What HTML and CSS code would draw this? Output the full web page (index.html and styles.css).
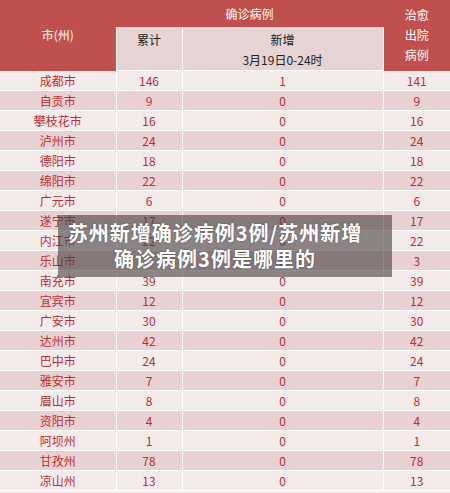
FILE: index.html
```html
<!DOCTYPE html>
<html lang="zh-CN">
<head>
    <meta charset="UTF-8">
    <title>苏州新增确诊病例3例</title>
    <link rel="stylesheet" href="styles.css">
</head>
<body>
    <div class="page">
        <table class="case-table">
            <colgroup>
                <col class="col-city">
                <col class="col-total">
                <col class="col-new">
                <col class="col-cured">
            </colgroup>
            <thead>
                <tr class="head-top">
                    <th rowspan="2" class="head-red">市(州)</th>
                    <th colspan="2" class="head-red">确诊病例</th>
                    <th rowspan="2" class="head-red head-cured">治愈<br>出院<br>病例</th>
                </tr>
                <tr class="head-sub">
                    <th class="sub">累计</th>
                    <th class="sub">新增<br>3月19日0-24时</th>
                </tr>
            </thead>
            <tbody>
                <tr><td>成都市</td><td>146</td><td>1</td><td>141</td></tr>
                <tr><td>自贡市</td><td>9</td><td>0</td><td>9</td></tr>
                <tr><td>攀枝花市</td><td>16</td><td>0</td><td>16</td></tr>
                <tr><td>泸州市</td><td>24</td><td>0</td><td>24</td></tr>
                <tr><td>德阳市</td><td>18</td><td>0</td><td>18</td></tr>
                <tr><td>绵阳市</td><td>22</td><td>0</td><td>22</td></tr>
                <tr><td>广元市</td><td>6</td><td>0</td><td>6</td></tr>
                <tr><td>遂宁市</td><td>17</td><td>0</td><td>17</td></tr>
                <tr><td>内江市</td><td>22</td><td>0</td><td>22</td></tr>
                <tr><td>乐山市</td><td>3</td><td>0</td><td>3</td></tr>
                <tr><td>南充市</td><td>39</td><td>0</td><td>39</td></tr>
                <tr><td>宜宾市</td><td>12</td><td>0</td><td>12</td></tr>
                <tr><td>广安市</td><td>30</td><td>0</td><td>30</td></tr>
                <tr><td>达州市</td><td>42</td><td>0</td><td>42</td></tr>
                <tr><td>巴中市</td><td>24</td><td>0</td><td>24</td></tr>
                <tr><td>雅安市</td><td>7</td><td>0</td><td>7</td></tr>
                <tr><td>眉山市</td><td>8</td><td>0</td><td>8</td></tr>
                <tr><td>资阳市</td><td>4</td><td>0</td><td>4</td></tr>
                <tr><td>阿坝州</td><td>1</td><td>0</td><td>1</td></tr>
                <tr><td>甘孜州</td><td>78</td><td>0</td><td>78</td></tr>
                <tr><td>凉山州</td><td>13</td><td>0</td><td>13</td></tr>
            </tbody>
        </table>

        <div class="title-overlay">
            苏州新增确诊病例3例/苏州新增<br>确诊病例3例是哪里的
        </div>
    </div>
</body>
</html>
```

FILE: styles.css
```css
body {
    margin: 0;
    padding: 0;
    background: #f4eded;
    font-family: "Noto Sans CJK SC", "Noto Sans", sans-serif;
}

.page {
    position: relative;
    width: 450px;
    height: 493px;
    overflow: hidden;
}

.case-table {
    width: 450px;
    border-collapse: collapse;
    table-layout: fixed;
    font-size: 12px;
}

.col-city { width: 116px; }
.col-total { width: 66px; }
.col-new { width: 201px; }
.col-cured { width: 67px; }

.head-red {
    background-color: #c0504d;
    color: #fff;
    font-weight: normal;
    padding: 0;
    line-height: 20px;
}

.head-top th {
    height: 27px;
    vertical-align: middle;
}

.head-top th[colspan] {
    vertical-align: top;
    padding-top: 4px;
    height: 23px;
}

.head-cured {
    vertical-align: middle;
}

.sub {
    background-color: #e6d3d3;
    color: #222;
    font-weight: normal;
    vertical-align: top;
    padding: 3px 0 0;
    height: 40px;
    line-height: 20px;
    border-left: 1px solid #fff;
    border-bottom: 1px solid #fff;
}

.sub + .sub {
    border-right: 1px solid #fff;
}

.case-table td {
    height: 19px;
    padding: 0;
    text-align: center;
    color: #b83034;
    line-height: 19px;
    border: 1px solid #fff;
    border-top: none;
    background-color: #f3eaea;
}

.case-table td:first-child {
    border-left: none;
}

.case-table td:last-child {
    border-right: none;
}

.case-table tbody tr:nth-child(even) td {
    background-color: #e8d1d2;
}

.title-overlay {
    position: absolute;
    left: 58px;
    top: 215px;
    width: 334px;
    height: 62px;
    box-sizing: border-box;
    padding: 5px 20px 0 0;
    background-color: rgba(70, 62, 63, 0.6);
    color: #fff;
    font-size: 20px;
    font-weight: bold;
    line-height: 26px;
    letter-spacing: 1px;
    text-align: center;
    text-shadow: 0 0 2px rgba(0, 0, 0, 0.4);
}
```
